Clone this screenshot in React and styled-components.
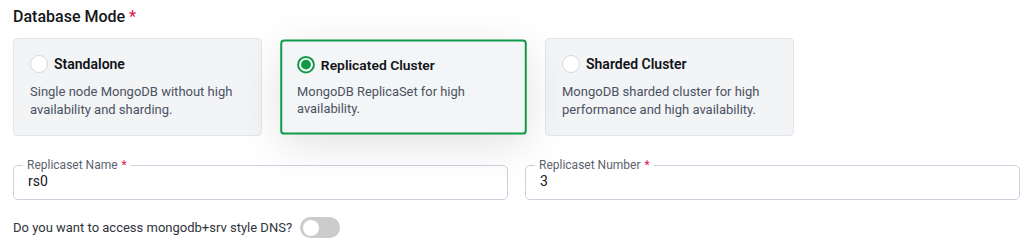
import React, { useState } from "react";
import styled, { createGlobalStyle, css } from "styled-components";

const Global = createGlobalStyle`
  html, body { margin: 0; padding: 0; background: #ffffff; }
  body { font-family: Roboto, "Noto Sans", "Liberation Sans", sans-serif; -webkit-font-smoothing: antialiased; }
  * { box-sizing: border-box; }
`;

const Page = styled.div`
  padding: 7px 8px 0 13px;
  width: 1028px;
`;

const Title = styled.h2`
  margin: 0 0 11px;
  font-size: 16px;
  line-height: 20px;
  font-weight: 500;
  color: #14161a;
`;

const Req = styled.span`
  color: #e0174f;
  margin-left: 4px;
`;

const Cards = styled.div`
  display: grid;
  grid-template-columns: repeat(3, 249px);
  column-gap: 17px;
`;

const Card = styled.div`
  height: 98px;
  padding: 15px 16px 16px;
  border-radius: 4px;
  background: #f3f4f6;
  border: 1px solid #e2e6ec;
  cursor: pointer;
  ${(p) =>
    p.$selected &&
    css`
      border: 2px solid #0f9a48;
      background: #f4f5f6;
      padding: 14px 15px 15px;
      transform: scale(0.99, 0.97);
      box-shadow: 0 10px 44px rgba(0, 0, 0, 0.12);
    `}
`;

const CardHead = styled.div`
  display: flex;
  align-items: center;
  gap: 6px;
  height: 20px;
`;

const Radio = styled.span`
  width: 18px;
  height: 18px;
  border-radius: 50%;
  background: #ffffff;
  border: 1px solid #d3d9e2;
  display: flex;
  align-items: center;
  justify-content: center;
  flex: none;
  ${(p) =>
    p.$checked &&
    css`
      border: 2px solid #0f9a48;
      &::after {
        content: "";
        width: 10px;
        height: 10px;
        border-radius: 50%;
        background: #0f9a48;
      }
    `}
`;

const CardTitle = styled.span`
  font-size: 14px;
  font-weight: 600;
  color: #111318;
`;

const CardDesc = styled.p`
  margin: 9px 0 0;
  font-size: 13px;
  line-height: 18px;
  color: #4a5262;
`;

const Fields = styled.div`
  display: grid;
  grid-template-columns: 1fr 1fr;
  column-gap: 17px;
  margin-top: 22px;
`;

const Fieldset = styled.fieldset`
  margin: 0;
  padding: 0 14px 10px;
  border: 1px solid #c9d1dd;
  border-radius: 5px;
  min-width: 0;
`;

const Legend = styled.legend`
  margin-left: -5px;
  padding: 0 4px;
  font-size: 12px;
  line-height: 14px;
  color: #5b6270;
`;

const Input = styled.input`
  display: block;
  width: 100%;
  border: 0;
  outline: none;
  padding: 0;
  margin: 1px 0 0;
  height: 16px;
  font-family: inherit;
  font-size: 14px;
  color: #15171c;
  background: transparent;
`;

const ToggleRow = styled.div`
  display: flex;
  align-items: center;
  gap: 8px;
  margin-top: 17px;
  font-size: 13px;
  color: #30343b;
`;

const Switch = styled.button`
  width: 40px;
  height: 21px;
  border-radius: 11px;
  border: 0;
  padding: 0 3px;
  background: ${(p) => (p.$on ? "#0f9a48" : "#cccccc")};
  display: flex;
  align-items: center;
  justify-content: ${(p) => (p.$on ? "flex-end" : "flex-start")};
  cursor: pointer;
  &::after {
    content: "";
    width: 16px;
    height: 16px;
    border-radius: 50%;
    background: #ffffff;
  }
`;

const modes = [
  { id: "standalone", title: "Standalone", desc: "Single node MongoDB without high availability and sharding." },
  { id: "replicated", title: "Replicated Cluster", desc: "MongoDB ReplicaSet for high availability." },
  { id: "sharded", title: "Sharded Cluster", desc: "MongoDB sharded cluster for high performance and high availability." },
];

export default function App() {
  const [mode, setMode] = useState("replicated");
  const [srv, setSrv] = useState(false);
  const [name, setName] = useState("rs0");
  const [num, setNum] = useState("3");
  return (
    <Page>
      <Global />
      <Title>
        Database Mode<Req>*</Req>
      </Title>
      <Cards>
        {modes.map((m) => (
          <Card key={m.id} $selected={mode === m.id} onClick={() => setMode(m.id)}>
            <CardHead>
              <Radio $checked={mode === m.id} />
              <CardTitle>{m.title}</CardTitle>
            </CardHead>
            <CardDesc>{m.desc}</CardDesc>
          </Card>
        ))}
      </Cards>
      <Fields>
        <Fieldset>
          <Legend>
            Replicaset Name<Req>*</Req>
          </Legend>
          <Input value={name} onChange={(e) => setName(e.target.value)} />
        </Fieldset>
        <Fieldset>
          <Legend>
            Replicaset Number<Req>*</Req>
          </Legend>
          <Input value={num} onChange={(e) => setNum(e.target.value)} />
        </Fieldset>
      </Fields>
      <ToggleRow>
        Do you want to access mongodb+srv style DNS?
        <Switch $on={srv} onClick={() => setSrv(!srv)} aria-label="toggle srv" />
      </ToggleRow>
    </Page>
  );
}
